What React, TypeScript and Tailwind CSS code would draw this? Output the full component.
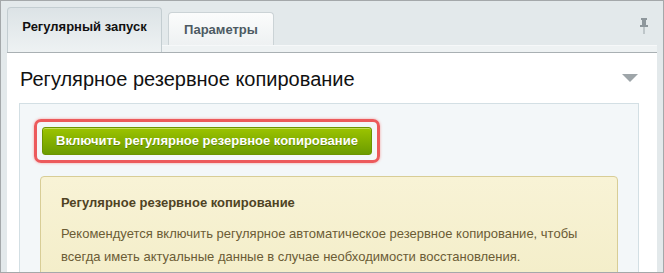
import { useState } from 'react';

const font = { fontFamily: '"Liberation Sans", Arial, sans-serif' };

export default function App() {
  const [tab, setTab] = useState(0);
  const tabs = ['Регулярный запуск', 'Параметры'];

  return (
    <div
      className="w-[664px] h-[273px] overflow-hidden border border-[#a4a8aa] bg-[#e3e9eb] flex flex-col"
      style={font}
    >
      {/* Tab bar */}
      <div className="relative h-[44px] shrink-0 flex items-end pl-[6px] gap-[6px]">
        {tabs.map((t, i) =>
          i === tab ? (
            <button
              key={t}
              onClick={() => setTab(i)}
              className="relative z-10 -mb-[7px] h-[45px] w-[155px] rounded-t-[4px] border border-b-0 border-[#c3cdd1] bg-gradient-to-b from-[#dce3e6] to-[#eef2f3] text-[13px] font-bold text-[#111] pb-[6px]"
            >
              {t}
            </button>
          ) : (
            <button
              key={t}
              onClick={() => setTab(i)}
              className="h-[33px] w-[106px] rounded-t-[4px] border border-b-0 border-[#cbd3d6] bg-gradient-to-b from-[#fbfcfc] to-[#eef1f2] text-[13px] font-bold text-[#4d5a63] pt-[1px]"
            >
              {t}
            </button>
          )
        )}
        <svg className="absolute right-[14px] top-[17px]" width="10" height="16" viewBox="0 0 10 16">
          <rect x="2" y="0" width="6" height="2" fill="#8e979c" />
          <rect x="3" y="2" width="4" height="5" fill="#8e979c" />
          <rect x="1" y="7" width="8" height="2" fill="#8e979c" />
          <rect x="4.5" y="9" width="1" height="7" fill="#9aa3a8" />
        </svg>
      </div>
      <div className="h-[8px] shrink-0 mx-[6px] border-t border-[#f6f8f9] bg-[#eef2f3] border-b border-b-[#a9b0b3]" />

      {/* Panel */}
      <div className="flex-1 mx-[6px] bg-white overflow-hidden">
        <div className="flex items-center justify-between h-[50px] pl-[13px] pr-[19px]">
          <h1 className="text-[20px] text-[#111] pt-[1px]">Регулярное резервное копирование</h1>
          <svg width="16" height="8" viewBox="0 0 16 8">
            <polygon points="0,0 16,0 8,8" fill="#9ea5a9" />
          </svg>
        </div>

        <div className="ml-[12px] w-[620px] h-[200px] border border-[#d3dfe4] bg-[#f3f7f9] pl-[14px] pt-[15px]">
          <div className="inline-block rounded-[7px] border-[3px] border-[#ec5a5c] p-[5px] shadow-[0_0_3px_#f3a0a0]">
            <button className="h-[28px] w-[330px] rounded-[3px] border border-[#6c9400] bg-gradient-to-b from-[#9cc400] to-[#6c9c00] text-[13px] font-bold text-white shadow-[inset_0_1px_0_#c4dc5a] [text-shadow:0_1px_0_rgba(0,0,0,0.25)]">
              Включить регулярное резервное копирование
            </button>
          </div>

          <div className="mt-[13px] ml-[6px] w-[578px] h-[120px] rounded-[4px] border border-[#d8cd96] bg-gradient-to-b from-[#f8f3d6] to-[#f3edc7] px-[20px] pt-[16px] text-[#5b4e2f]">
            <div className="text-[13px] font-bold text-[#4f4324]">Регулярное резервное копирование</div>
            <p className="mt-[9px] text-[13px] leading-[23px] text-[#6b5c35]">
              Рекомендуется включить регулярное автоматическое резервное копирование, чтобы
              <br />
              всегда иметь актуальные данные в случае необходимости восстановления.
            </p>
          </div>
        </div>
      </div>
    </div>
  );
}
